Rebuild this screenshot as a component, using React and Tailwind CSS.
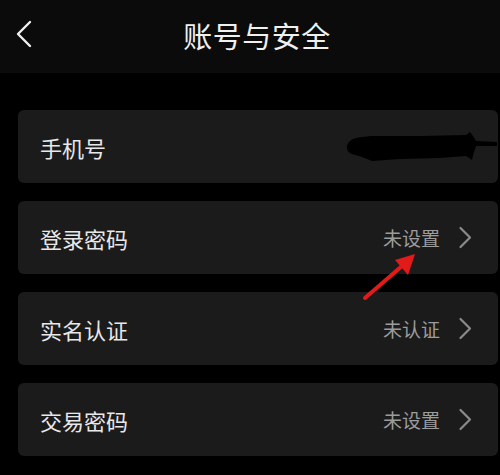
import React from "react";

const font = { fontFamily: '"Noto Sans CJK SC", "Noto Sans", sans-serif' };

function Chevron() {
  return (
    <svg width="14" height="23" viewBox="0 0 14 23" className="shrink-0">
      <path d="M2.5 2 L12 11.5 L2.5 21" fill="none" stroke="#8a8a8a" strokeWidth="2.2" strokeLinecap="round" strokeLinejoin="round" />
    </svg>
  );
}

function Row({ label, value, children }) {
  return (
    <div className="h-[73px] ml-[18px] mr-[2px] rounded-[6px] bg-[#1b1b1b] flex items-center pl-[22px] pr-[26px]">
      <span className="text-[22px] text-[#e8e8e8] leading-none flex-1">{label}</span>
      {value && (
        <div className="flex items-center gap-[18px]">
          <span className="text-[19px] text-[#9c9c9c] leading-none">{value}</span>
          <Chevron />
        </div>
      )}
      {children}
    </div>
  );
}

export default function App() {
  return (
    <div className="relative w-[500px] h-[475px] bg-black overflow-hidden" style={font}>
      <div className="relative h-[73px] bg-[#0b0b0b] flex items-center justify-center pl-[14px] pb-[2px]">
        <svg width="20" height="30" viewBox="0 0 20 30" className="absolute left-[14px] top-[19px]">
          <path d="M16 3 L4 15 L16 27" fill="none" stroke="#f0f0f0" strokeWidth="2.4" strokeLinecap="round" strokeLinejoin="round" />
        </svg>
        <span className="text-[29px] text-[#f0f0f0] leading-none tracking-[0.5px]">账号与安全</span>
      </div>
      <div className="flex flex-col gap-[18px] pt-[37px]">
        <Row label="手机号">
          <svg width="500" height="475" viewBox="0 0 500 475" className="absolute left-0 top-0">
            <path d="M350 141 C354 137 362 137 372 136 L420 136 L466 135 L470 132 L473 136 L476 141 L497 142 L497 146 L476 146 L474 152 L472 160 L466 156 L440 158 L400 159 L372 161 L362 157 L352 154 C346 152 345 145 350 141 Z" fill="#000" />
          </svg>
        </Row>
        <Row label="登录密码" value="未设置" />
        <Row label="实名认证" value="未认证" />
        <Row label="交易密码" value="未设置" />
      </div>
      <svg width="500" height="475" viewBox="0 0 500 475" className="absolute left-0 top-0 pointer-events-none">
        <line x1="365" y1="298" x2="402" y2="266" stroke="#e21a1a" strokeWidth="4" strokeLinecap="round" />
        <polygon points="415,254 395,260 408,275" fill="#e21a1a" />
      </svg>
    </div>
  );
}
